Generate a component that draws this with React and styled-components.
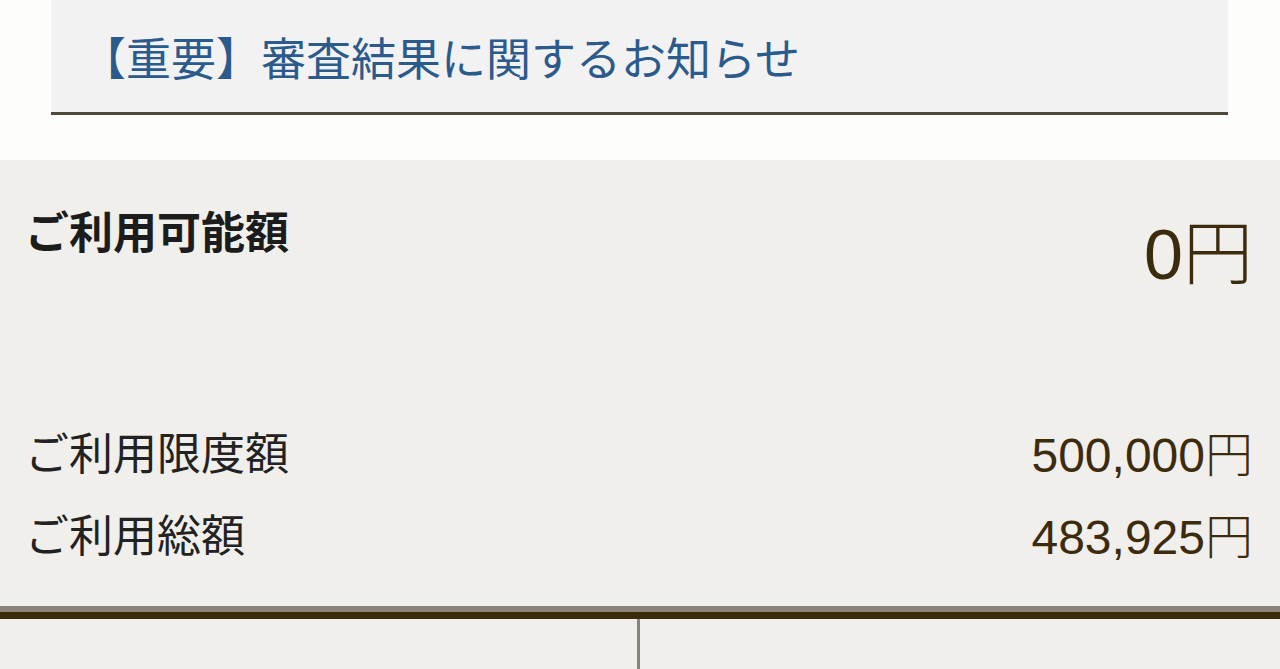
import React from 'react'
import styled, { createGlobalStyle } from 'styled-components'

const Global = createGlobalStyle`
  html, body {
    margin: 0;
    padding: 0;
    background: #fdfdfb;
  }
  body {
    font-family: "Liberation Sans", "Noto Sans CJK JP", sans-serif;
    overflow: hidden;
  }
`

const Page = styled.div`
  display: flex;
  flex-direction: column;
  height: 669px;
  overflow: hidden;
`

const Notice = styled.a`
  display: flex;
  align-items: center;
  margin: 0 52px 0 51px;
  height: 112px;
  padding-left: 30px;
  background: #f2f2f2;
  border-bottom: 3px solid #4e4a3a;
  color: #2b5b8c;
  font-family: "Noto Sans CJK JP", sans-serif;
  font-size: 45px;
  line-height: 1;
  text-decoration: none;
  box-sizing: content-box;
`

const Card = styled.section`
  margin-top: 45px;
  height: 452px;
  box-sizing: border-box;
  padding: 48px 27px 32px 25px;
  background: #f0efeb;
  border-bottom: 6px solid #8a847a;
  display: flex;
  flex-direction: column;
`

const TopRow = styled.div`
  display: flex;
  justify-content: space-between;
  align-items: flex-start;
`

const Title = styled.h2`
  margin: 0;
  font-family: "Noto Sans CJK JP", sans-serif;
  font-weight: 700;
  font-size: 44px;
  line-height: 44px;
  color: #1c1c1c;
`

const Amount = styled.div`
  margin-top: 6px;
  font-size: ${p => p.$size || 44}px;
  line-height: 1;
  color: #3d2b0e;
  white-space: nowrap;
`

const Yen = styled.span`
  font-family: "Noto Sans CJK JP", sans-serif;
  font-weight: 300;
`

const Details = styled.div`
  margin-top: auto;
  display: flex;
  flex-direction: column;
`

const Row = styled.div`
  display: flex;
  justify-content: space-between;
  align-items: center;
  height: 82px;
`

const Label = styled.span`
  font-family: "Noto Sans CJK JP", sans-serif;
  font-weight: 400;
  font-size: 44px;
  color: #222;
`

const Value = styled.span`
  font-size: 48px;
  color: #3d2b0e;
`

const Tabs = styled.div`
  display: grid;
  grid-template-columns: 637px 1fr;
  flex: 1;
  background: #f0efeb;
  border-top: 7px solid #3b2a0c;
`

const Tab = styled.div`
  border-left: ${p => (p.$divider ? '3px solid #8a847a' : 'none')};
`

const details = [
  { label: 'ご利用限度額', value: '500,000' },
  { label: 'ご利用総額', value: '483,925' },
]

export default function App() {
  return (
    <Page>
      <Global />
      <Notice href="#">【重要】審査結果に関するお知らせ</Notice>
      <Card>
        <TopRow>
          <Title>ご利用可能額</Title>
          <Amount $size={70}>
            0<Yen>円</Yen>
          </Amount>
        </TopRow>
        <Details>
          {details.map(d => (
            <Row key={d.label}>
              <Label>{d.label}</Label>
              <Value>
                {d.value}
                <Yen>円</Yen>
              </Value>
            </Row>
          ))}
        </Details>
      </Card>
      <Tabs>
        <Tab />
        <Tab $divider />
      </Tabs>
    </Page>
  )
}
